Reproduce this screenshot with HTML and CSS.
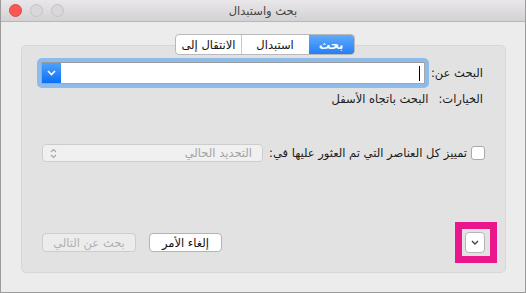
FILE: index.html
```html
<!DOCTYPE html>
<html lang="ar" dir="rtl">
<head>
    <meta charset="UTF-8">
    <meta name="viewport" content="width=device-width, initial-scale=1.0">
    <title>بحث واستبدال</title>
    <link rel="stylesheet" href="styles.css">
</head>
<body>
    <div class="window">
        <div class="titlebar">
            <div class="lights">
                <span class="light red"></span>
                <span class="light"></span>
                <span class="light"></span>
            </div>
            <div class="title">بحث واستبدال</div>
        </div>

        <div class="content">
            <div class="tabs">
                <span class="tab active">بحث</span>
                <span class="tab replace">استبدال</span>
                <span class="tab goto">الانتقال إلى</span>
            </div>

            <div class="panel">
                <div class="find-row">
                    <label class="label">البحث عن:</label>
                    <div class="search-ring">
                        <div class="search-box">
                            <span class="caret"></span>
                            <span class="drop-btn">
                                <svg width="9" height="6" viewBox="0 0 9 6"><path d="M1 1 L4.5 4.5 L8 1" fill="none" stroke="#fff" stroke-width="1.6"/></svg>
                            </span>
                        </div>
                    </div>
                </div>

                <div class="options-row">
                    <span class="label">الخيارات:</span>
                    <span class="value">البحث باتجاه الأسفل</span>
                </div>

                <div class="highlight-row">
                    <span class="checkbox"></span>
                    <span class="check-text">تمييز كل العناصر التي تم العثور عليها في:</span>
                    <div class="popup">
                        <span class="popup-text">التحديد الحالي</span>
                        <svg class="updown" width="7" height="11" viewBox="0 0 7 11"><path d="M1 4 L3.5 1.5 L6 4 M1 7 L3.5 9.5 L6 7" fill="none" stroke="#a5a5a5" stroke-width="1.1"/></svg>
                    </div>
                </div>

                <div class="button-row">
                    <div class="more-wrap">
                        <button class="more">
                            <svg width="8" height="5" viewBox="0 0 8 5"><path d="M1 1 L4 4 L7 1" fill="none" stroke="#444" stroke-width="1.4"/></svg>
                        </button>
                        <span class="mark"></span>
                    </div>
                    <div class="spacer"></div>
                    <button class="btn cancel">إلغاء الأمر</button>
                    <button class="btn next" disabled>بحث عن التالي</button>
                </div>
            </div>
        </div>
    </div>
</body>
</html>
```

FILE: styles.css
```css
html, body {
    margin: 0;
    padding: 0;
}

body {
    font-family: 'DejaVu Sans', Tahoma, sans-serif;
    font-size: 11.5px;
    color: #1a1a1a;
    background-color: #ececec;
}

.window {
    width: 526px;
    height: 293px;
    box-sizing: border-box;
    border: 1px solid #9c9c9c;
    border-top: none;
    background-color: #ececec;
    display: flex;
    flex-direction: column;
}

.titlebar {
    direction: ltr;
    height: 21px;
    border-bottom: 1px solid #b7b7b7;
    background: linear-gradient(#e9e7e9, #d3d1d3);
    display: grid;
    grid-template-columns: 1fr auto 1fr;
    align-items: center;
}

.lights {
    display: flex;
    gap: 8px;
    padding-left: 8px;
}

.light {
    width: 11px;
    height: 11px;
    border-radius: 50%;
    background-color: #d9d7d9;
    border: 0.5px solid #c4c2c4;
}

.light.red {
    background-color: #fc5753;
    border-color: #df4744;
}

.title {
    font-size: 11.5px;
    color: #444;
    direction: rtl;
}

.content {
    flex: 1;
    display: flex;
    flex-direction: column;
    padding: 12px 19px 19px 20px;
}

.tabs {
    align-self: center;
    display: flex;
    height: 19px;
    margin-bottom: -10px;
    margin-left: 3px;
    border: 1px solid #b9b9b9;
    border-radius: 4px;
    background-color: #fff;
    position: relative;
    z-index: 1;
    overflow: hidden;
}

.tab {
    display: flex;
    align-items: center;
    justify-content: center;
    font-size: 11.5px;
    color: #111;
    border-left: 1px solid #c9c9c9;
}

.tab.active {
    width: 45px;
    background: linear-gradient(#62abfa, #237ff6);
    color: #fff;
    font-weight: bold;
    border-left: none;
}

.tab.replace {
    width: 67px;
}

.tab.goto {
    padding: 0 5px;
    border-left: none;
}

.panel {
    flex: 1;
    display: flex;
    flex-direction: column;
    background-color: #e2e2e2;
    border: 1px solid #d7d7d7;
    border-radius: 5px;
    padding: 12px 22px 19px 15px;
}

.label {
    white-space: nowrap;
}

.find-row {
    display: flex;
    align-items: center;
}

.search-ring {
    flex: 1;
    border: 4px solid #8fbbea;
    border-radius: 5px;
    margin-right: 2px;
}

.search-box {
    height: 20px;
    border: 1px solid #a6a6a6;
    border-top-color: #9a9a9a;
    background-color: #fff;
    display: flex;
    align-items: center;
    justify-content: space-between;
}

.caret {
    width: 1px;
    height: 15px;
    background-color: #000;
    margin-right: 4px;
}

.drop-btn {
    width: 19px;
    height: 20px;
    background: linear-gradient(#4ea2fd, #0a6ff6);
    display: flex;
    align-items: center;
    justify-content: center;
}

.options-row {
    display: flex;
    gap: 10px;
    margin-top: 3px;
    line-height: 16px;
}

.highlight-row {
    display: flex;
    align-items: center;
    margin-top: 37px;
    margin-right: -2px;
}

.checkbox {
    width: 12px;
    height: 12px;
    border: 1px solid #a9a9a9;
    border-radius: 3px;
    background-color: #fff;
    margin-left: 4px;
}

.check-text {
    white-space: nowrap;
    margin-left: 6px;
}

.popup {
    flex: 1;
    height: 16px;
    border: 1px solid #cdcdcd;
    border-radius: 4px;
    background-color: #f0f0f0;
    display: flex;
    align-items: center;
    justify-content: space-between;
    padding: 0 10px 0 7px;
    margin-left: 5px;
}

.popup-text {
    color: #a3a3a3;
}

.button-row {
    margin-top: auto;
    display: flex;
    align-items: center;
    margin-right: -2px;
    margin-left: 5px;
}

.spacer {
    flex: 1;
}

.more-wrap {
    position: relative;
    display: flex;
}

.more {
    width: 20px;
    height: 21px;
    padding: 0;
    border: 1px solid #b5b5b5;
    border-radius: 4px;
    background-color: #fff;
    display: flex;
    align-items: center;
    justify-content: center;
}

.mark {
    position: absolute;
    top: -10px;
    bottom: -10px;
    right: -12px;
    left: -10px;
    border: 7px solid #ea178c;
}

.btn {
    font-family: 'DejaVu Sans', Tahoma, sans-serif;
    font-size: 11.5px;
    height: 19px;
    padding: 0;
    border: 1px solid #b3b3b3;
    border-radius: 4px;
    background-color: #fff;
    color: #111;
}

.btn.cancel {
    width: 73px;
}

.btn.next {
    width: 94px;
    margin-right: 13px;
    background-color: #ececec;
    border-color: #cdcdcd;
    color: #b0b0b0;
}
```
